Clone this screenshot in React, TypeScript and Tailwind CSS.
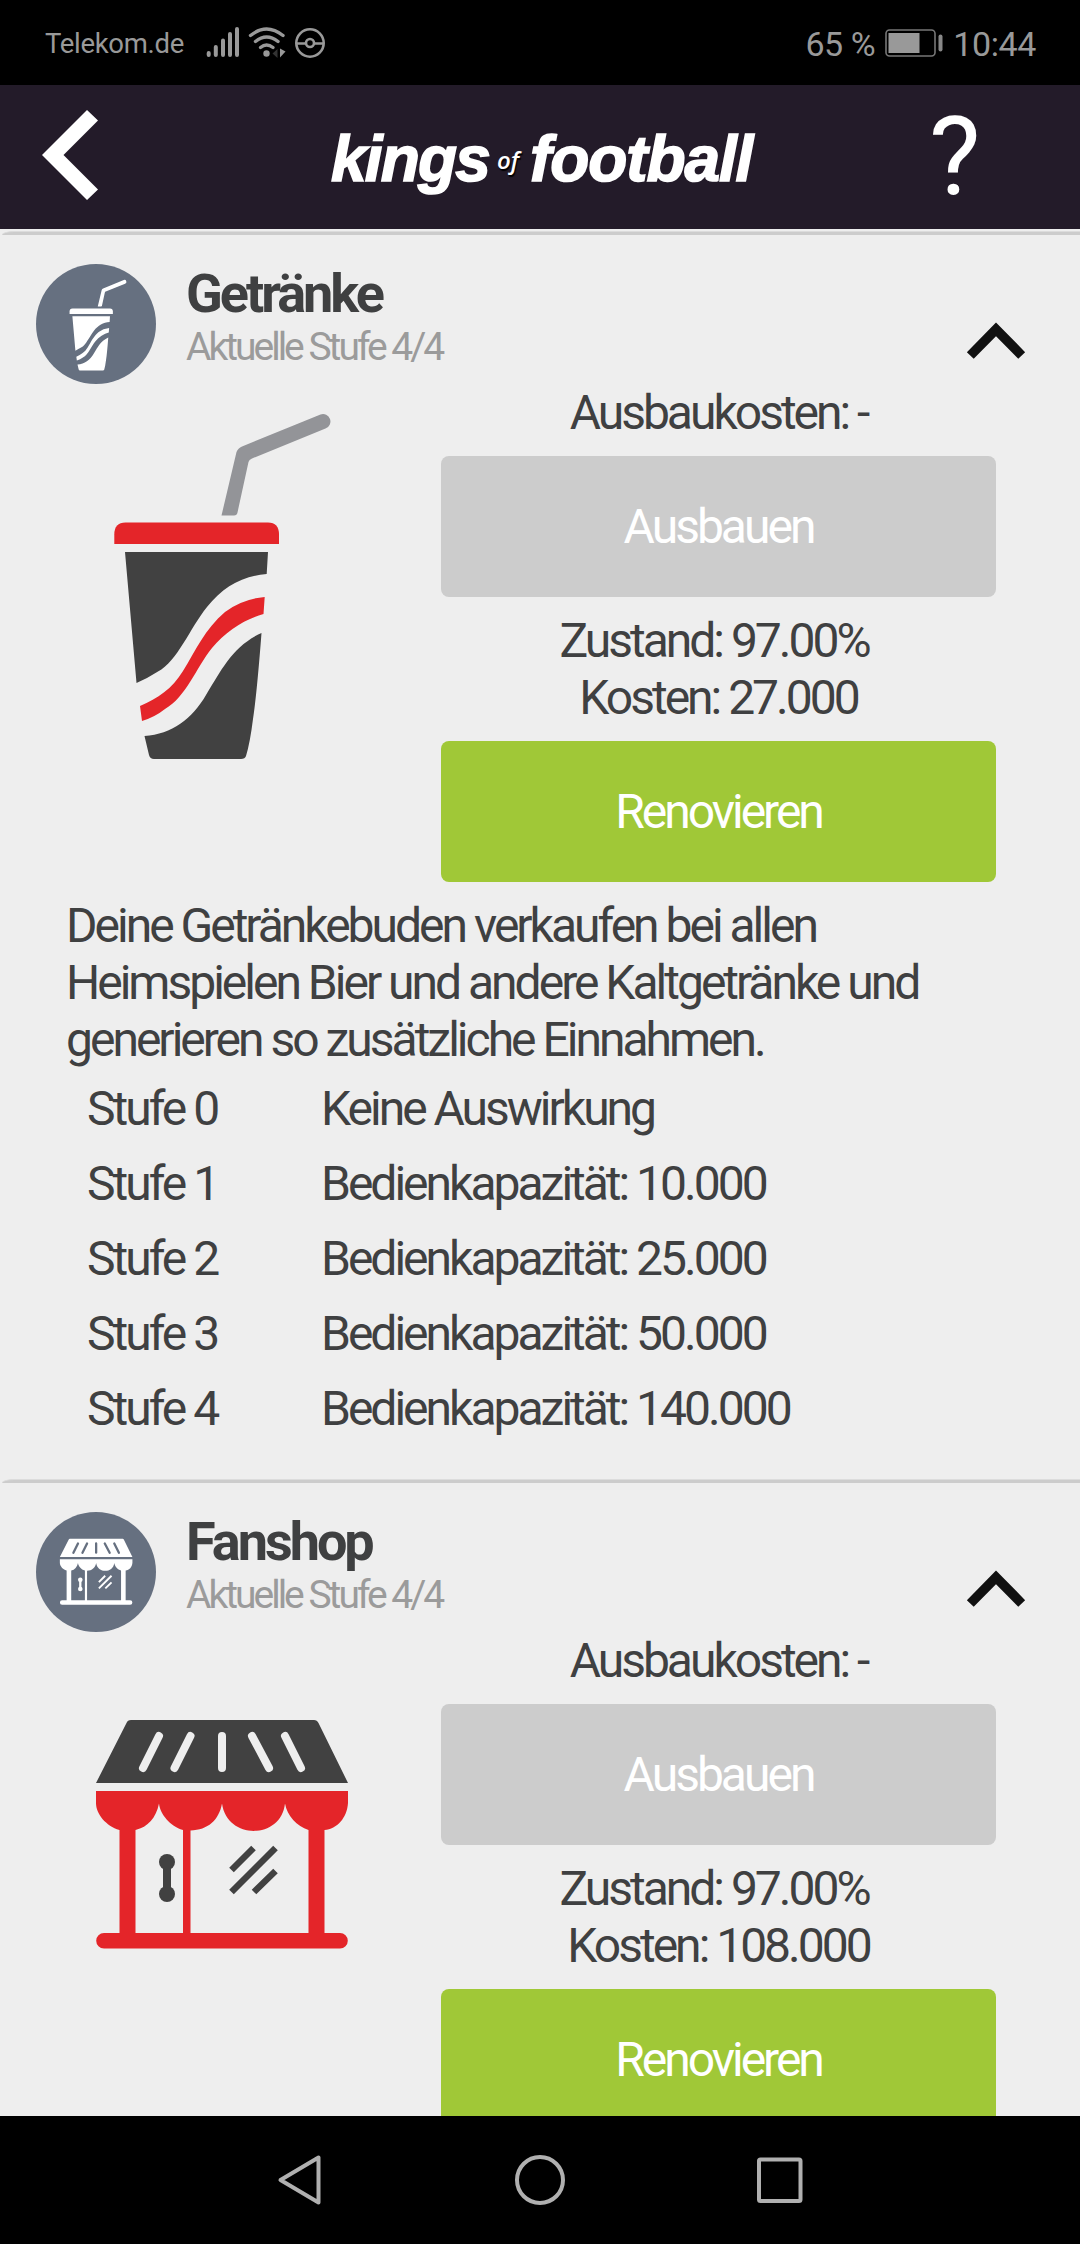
import clsx from "clsx";

interface Stufe {
  nombre: string;
  valor: string;
}

interface SectionProps {
  titulo: string;
  kosten: string;
  badge: React.ReactNode;
  imagen: React.ReactNode;
  texto?: string;
  stufen?: Stufe[];
}

const stufen: Stufe[] = [
  { nombre: "Stufe 0", valor: "Keine Auswirkung" },
  { nombre: "Stufe 1", valor: "Bedienkapazität: 10.000" },
  { nombre: "Stufe 2", valor: "Bedienkapazität: 25.000" },
  { nombre: "Stufe 3", valor: "Bedienkapazität: 50.000" },
  { nombre: "Stufe 4", valor: "Bedienkapazität: 140.000" },
];

const StatusBar = () => (
  <div className="flex h-[85px] shrink-0 items-center justify-between bg-black pt-[5px] pr-11 pl-[45px] text-[#999999]">
    <div className="flex items-center">
      <span className="mt-[-2px] w-[150px] text-[27.5px] tracking-[-0.3px]">Telekom.de</span>
      <svg className="h-[60px] w-[140px]" viewBox="195 15 140 60">
        <g fill="none" stroke="#999" strokeWidth="4" strokeLinecap="round">
          <path d="M208.7 53v2M215.8 47v8M223 40.5v14.500M230 34v21M237 29v26" />
        </g>
        <g fill="none" stroke="#999" strokeWidth="3.4" strokeLinecap="round">
          <path d="M250.500 35.500Q266.500 22.500 283 35.500" />
          <path d="M255.500 41.500Q266.500 32.500 278 41.500" />
          <path d="M260.500 47.500Q266.500 42.500 273 47.500" />
        </g>
        <circle cx="266.500" cy="53.500" r="3.200" fill="#999" />
        <path d="M277.500 49v9l-5-4.500z" fill="#333" />
        <path d="M280 48.500v9l5.500-6z" fill="#999" />
        <g fill="none" stroke="#999" strokeWidth="2.600">
          <circle cx="310" cy="43" r="13.700" />
          <circle cx="310" cy="43" r="4" />
          <path d="M296.500 43.500h9.500M314 43.500h9.500" />
        </g>
      </svg>
    </div>
    <div className="flex items-center text-[34px] tracking-[-0.4px]">
      <span className="mt-[-2px]">65 %</span>
      <svg className="mr-2.5 mb-[5px] ml-2.5 h-7 w-[58px]" viewBox="0 0 58 28">
        <rect x="1" y="1" width="49" height="26" rx="3.500" fill="none" stroke="#777" strokeWidth="1.600" />
        <rect x="3.500" y="4" width="31" height="20" fill="#999" />
        <rect x="53.500" y="5.500" width="4" height="17" rx="2" fill="#888" />
      </svg>
      <span className="mt-[-2px]">10:44</span>
    </div>
  </div>
);

const Header = () => (
  <header className="flex h-36 shrink-0 items-center bg-[#231b29] pl-[42px] text-white">
    <svg className="mb-[5px] h-[90px] w-14" viewBox="0 0 56 90">
      <path d="M45 0L56 10.500L21.500 45L56 79.500L45 90L0 45z" fill="#fff" />
    </svg>
    <div className="mt-[5px] ml-[233px] flex w-[598px] items-center font-['Liberation_Sans'] leading-[75px] font-bold italic">
      <span className="w-[166px] text-[64px] tracking-[-1.8px] [-webkit-text-stroke:1.6px_white]">kings</span>
      <span className="w-[33px] font-['Open_Sans'] text-[24px] font-semibold text-shadow-[1px_2px_1px_#000]">of</span>
      <span className="text-[64px] tracking-[-1.1px] [-webkit-text-stroke:1.6px_white]">football</span>
    </div>
    <span className="text-[109px] leading-none">?</span>
  </header>
);

const CupIcon = ({ mono }: { mono?: boolean }) => (
  <g>
    <path
      d="M221.500 515.500L236.500 452Q238 448 242 446.500L320.500 414.500a7.200 7.200 0 0 1 5 14L252 458.500Q249 459.500 248.500 462L237.500 512.500Q237 515.500 234 515.500z"
      className={clsx(mono ? "fill-white" : "fill-[#939498]")}
    />
    <path
      d="M114.300 544V534.500Q114.300 522.500 125.500 522.500H268Q279 522.500 279 534.500V544z"
      className={clsx(mono ? "fill-white" : "fill-[#e42529]")}
    />
    <path
      d="M125 552H268L266.700 574C242 576 223 587 207 607C190 628 177 662 158 671.500Q148 678 136.500 683z"
      className={clsx(mono ? "fill-white" : "fill-[#414141]")}
    />
    <path
      d="M264.700 597L263.500 614C245 619 226 631 212 648C196 668 186 697 165 709Q155 717 142 721L140 706C158 698 172 689 183 671C196 650 205 629 225 612Q242 599 264.700 597z"
      className={clsx(mono ? "fill-white" : "fill-[#e42529]")}
    />
    <path
      d="M261.500 633Q257 692 253 719Q250 743 246 756Q245 759 241 759H154Q150 759 149 755L144.500 736C172 734 192 719 206 695C222 669 233 646 261.500 633z"
      className={clsx(mono ? "fill-white" : "fill-[#414141]")}
    />
  </g>
);

const ShopIcon = ({ mono }: { mono?: boolean }) => {
  const dark = mono ? "#ffffff" : "#414141";
  const red = mono ? "#ffffff" : "#e42529";
  const back = mono ? "#667080" : "#eeeeee";

  return (
    <g>
      <path d="M96 1783L126.500 1723Q127.500 1720 131 1720H314Q317 1720 318.500 1723L348 1783z" fill={dark} />
      <path
        d="M159 1736L143 1768M190.500 1736L174.500 1768M222 1736V1768M252 1736L269 1768M285 1736L301 1768"
        stroke={back}
        strokeWidth="8"
        strokeLinecap="round"
      />
      <path
        d="M96 1791H348V1803C347 1818 337 1829 324.500 1830V1933H340a7.800 7.800 0 0 1 0 15.600H104a7.800 7.800 0 0 1 0-15.600H119.500V1830C106 1826 96 1814 96 1803zM135.500 1830V1933H183V1830C170 1826 160 1814 159 1803.500C156 1818 148 1827 135.500 1830zM190.500 1830.500V1933H308.500V1830C297 1826 287 1816 285 1803.500C281 1840 227 1840 222 1803.500C219 1820 208 1830 190.500 1830.500z"
        fill={red}
      />
      <circle cx="167" cy="1862" r="8" fill={dark} />
      <circle cx="167" cy="1894" r="8" fill={dark} />
      <path d="M167 1862V1894" stroke={dark} strokeWidth="8" />
      <path d="M231.500 1870L253.500 1848M231.500 1892L275.500 1848M254 1892L275.500 1871" stroke={dark} strokeWidth="6.500" />
    </g>
  );
};

const Section = ({ titulo, kosten, badge, imagen, texto, stufen }: SectionProps) => {
  return (
    <section className="h-[1248px] shrink-0 text-[48px] leading-[57px] tracking-[-3px] text-[#3f4041]">
      <div className="ml-0.5 h-1 rounded-tl-[12px_4px] border-t border-[#dcdcdc] bg-[#cccccc]" />
      <div className="flex h-[153px] pl-9">
        <div className="mt-[29px] h-[120px] w-[120px] overflow-hidden rounded-full bg-[#667080]">{badge}</div>
        <div className="mt-7 ml-[30px] flex-1">
          <h2 className="text-[54px] leading-[62px] font-bold">{titulo}</h2>
          <p className="mt-px text-[39px] leading-[43px] text-[#9b9b9b]">Aktuelle Stufe 4/4</p>
        </div>
        <svg className="mt-[88px] mr-[54px] h-9 w-[60px] overflow-visible" viewBox="0 0 60 36">
          <path d="M4.300 32.500L30 6.300L55.700 32.500" fill="none" stroke="#111" strokeWidth="9.600" />
        </svg>
      </div>
      <div className="flex">
        <div className="w-[441px]">{imagen}</div>
        <div className="flex w-[555px] flex-col text-center">
          <p className="mt-[-4px] h-[72px]">Ausbaukosten: -</p>
          <button className="h-[141px] rounded-lg bg-[#cccccc] tracking-[-3px] text-white">Ausbauen</button>
          <div className="h-36 pt-[15px]">
            <p className="pr-[9px]">Zustand: 97.00%</p>
            <p>Kosten: {kosten}</p>
          </div>
          <button className="h-[141px] rounded-lg bg-[#a0c837] tracking-[-3px] text-white">Renovieren</button>
        </div>
      </div>
      {texto && <p className="mt-[15px] ml-[66px] w-[870px]">{texto}</p>}
      {stufen && (
        <div className="mt-[3px] ml-[87px]">
          {stufen.map((s) => (
            <div key={s.nombre} className="flex h-[75px] items-center">
              <span className="w-[234px]">{s.nombre}</span>
              <span>{s.valor}</span>
            </div>
          ))}
        </div>
      )}
    </section>
  );
};

const NavBar = () => (
  <nav className="flex h-32 shrink-0 items-center justify-center bg-black">
    <svg className="h-16 w-[560px]" viewBox="260 2148 560 64" fill="none" stroke="#b0b0b0" strokeWidth="4" strokeLinejoin="round">
      <path d="M280.500 2180L318.500 2157.500V2202.500z" />
      <circle cx="540" cy="2180" r="23" />
      <rect x="759" y="2159.500" width="41.500" height="41.500" rx="1.500" />
    </svg>
  </nav>
);

export default function App() {
  return (
    <div className="flex h-[2244px] w-[1080px] flex-col overflow-hidden bg-[#eeeeee] font-[Roboto,sans-serif]">
      <StatusBar />
      <Header />
      <main className="flex min-h-0 flex-1 flex-col overflow-hidden pt-0.5">
        <Section
          titulo="Getränke"
          kosten="27.000"
          badge={
            <svg className="h-full w-full" viewBox="0 0 120 120">
              <g transform="translate(3.500 -93) scale(0.263)">
                <CupIcon mono />
              </g>
            </svg>
          }
          imagen={
            <svg className="h-[400px] w-[441px]" viewBox="0 388 441 400">
              <CupIcon />
            </svg>
          }
          texto="Deine Getränkebuden verkaufen bei allen Heimspielen Bier und andere Kaltgetränke und generieren so zusätzliche Einnahmen."
          stufen={stufen}
        />
        <Section
          titulo="Fanshop"
          kosten="108.000"
          badge={
            <svg className="h-full w-full" viewBox="0 0 120 120">
              <g transform="translate(-3.800 -468.500) scale(0.288)">
                <ShopIcon mono />
              </g>
            </svg>
          }
          imagen={
            <svg className="h-[400px] w-[441px]" viewBox="0 1636 441 400">
              <ShopIcon />
            </svg>
          }
        />
      </main>
      <NavBar />
    </div>
  );
}
